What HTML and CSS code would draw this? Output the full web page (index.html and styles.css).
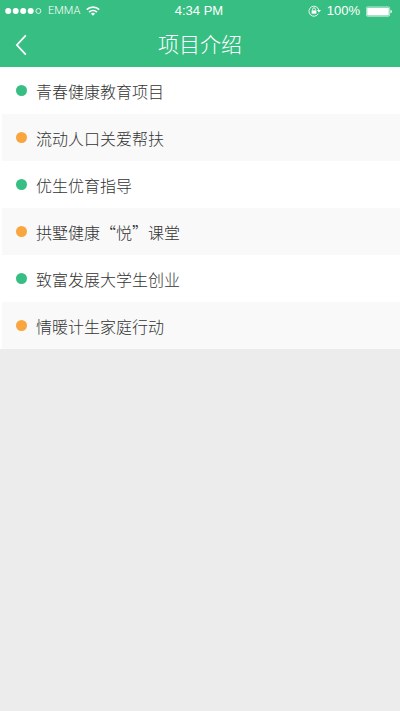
FILE: index.html
```html
<!DOCTYPE html>
<html lang="zh-CN">
<head>
<meta charset="utf-8">
<meta name="viewport" content="width=device-width, initial-scale=1">
<title>项目介绍</title>
<link rel="stylesheet" href="styles.css">
</head>
<body>
<header class="header">
  <div class="status">
    <div class="status-left">
      <svg class="signal" width="37" height="8" viewBox="0 0 37 8" aria-hidden="true">
        <g fill="#fff"><circle cx="3.2" cy="4" r="3"/><circle cx="10.7" cy="4" r="3"/><circle cx="18.2" cy="4" r="3"/><circle cx="25.7" cy="4" r="3"/></g>
        <circle cx="33.4" cy="4" r="2.5" fill="none" stroke="#fff" stroke-width=".8"/>
      </svg>
      <span class="carrier">EMMA</span>
      <svg width="14" height="10" viewBox="0 0 14 10" aria-hidden="true">
        <g fill="none" stroke="#fff" stroke-width="1.7"><path d="M.8 3.7a8.8 8.8 0 0 1 12.4 0"/><path d="M3.1 6.1a5.5 5.5 0 0 1 7.8 0"/></g>
        <path d="M7 9.8 4.9 7.7a3 3 0 0 1 4.2 0z" fill="#fff"/>
      </svg>
    </div>
    <span class="time">4:34 PM</span>
    <div class="status-right">
      <svg width="13" height="12" viewBox="0 0 13 12" aria-hidden="true">
        <path d="M10.3 8.7A5 5 0 1 1 10.8 5" fill="none" stroke="#fff" stroke-width=".9"/>
        <path d="M9 4.9h4L11 7.4z" fill="#fff"/>
        <path d="M3.6 5.4h4.8v3.3H3.6z" fill="#fff"/>
        <path d="M4.6 5.5V4.2a1.4 1.4 0 0 1 2.8 0v1.3" fill="none" stroke="#fff" stroke-width=".8"/>
      </svg>
      <span class="percent">100%</span>
      <svg class="battery" width="27" height="11" viewBox="0 0 27 11" aria-hidden="true">
        <rect x=".4" y=".9" width="23.2" height="9.4" rx="1.2" fill="none" stroke="#fff" stroke-width=".6"/>
        <rect x="1.2" y="1.7" width="21.6" height="7.8" rx=".6" fill="#fff"/>
        <path d="M24.5 3.8q1.5.5 1.5 1.8t-1.5 1.8z" fill="#fff"/>
      </svg>
    </div>
  </div>
  <nav class="navbar">
    <button class="back" type="button" aria-label="返回">
      <svg width="12" height="22" viewBox="0 0 12 22" aria-hidden="true"><path d="M10.8 1.4 1.9 11l8.9 9.6" fill="none" stroke="#fff" stroke-width="1.8"/></svg>
    </button>
    <h1 class="title">项目介绍</h1>
  </nav>
</header>
<main>
  <ul class="list">
    <li class="item"><a class="link" href="#">青春健康教育项目</a></li>
    <li class="item"><a class="link" href="#">流动人口关爱帮扶</a></li>
    <li class="item"><a class="link" href="#">优生优育指导</a></li>
    <li class="item"><a class="link" href="#">拱墅健康“悦”课堂</a></li>
    <li class="item"><a class="link" href="#">致富发展大学生创业</a></li>
    <li class="item"><a class="link" href="#">情暖计生家庭行动</a></li>
  </ul>
</main>
</body>
</html>
```
FILE: styles.css
```css
* {
  box-sizing: border-box;
}

body {
  margin: 0;
  min-height: 100vh;
  background: #ececec;
  color: #333;
  font-family: "Noto Sans CJK SC", sans-serif;
  font-weight: 300;
}

.header {
  background: #37be82;
  color: #fff;
}

.status {
  display: grid;
  grid-template-columns: 1fr auto 1fr;
  align-items: center;
  height: 22px;
  padding: 0 7px 0 5px;
  font-family: "Liberation Sans", Arial, sans-serif;
  font-size: 13px;
  line-height: 22px;
}

.status-left,
.status-right {
  display: flex;
  align-items: center;
  gap: 6px;
}

.status-right {
  justify-content: flex-end;
}

.carrier {
  font-family: Roboto, "Liberation Sans", sans-serif;
  font-size: 11px;
}

.navbar {
  display: grid;
  grid-template-columns: 44px 1fr 44px;
  align-items: center;
  height: 45px;
}

.back {
  display: flex;
  align-items: center;
  height: 44px;
  padding: 0 0 0 15px;
  border: 0;
  background: none;
}

.title {
  margin: 0;
  padding-bottom: 4px;
  font-size: 21px;
  font-weight: 300;
  line-height: 40px;
  text-align: center;
}

.list {
  margin: 0;
  padding: 0;
  list-style: none;
}

.item {
  border-left: 2px solid #fff;
  background: #fff;
}

.item:nth-child(even) {
  background: #f9f9f9;
}

.link {
  display: flex;
  align-items: center;
  gap: 9px;
  height: 47px;
  padding: 0 14px;
  color: inherit;
  font-size: 16px;
  line-height: 24px;
  text-decoration: none;
}

.link::before {
  content: "";
  flex: none;
  width: 11px;
  height: 11px;
  border-radius: 50%;
  background: #37be82;
}

.item:nth-child(even) .link::before {
  background: #f9a640;
}
```
